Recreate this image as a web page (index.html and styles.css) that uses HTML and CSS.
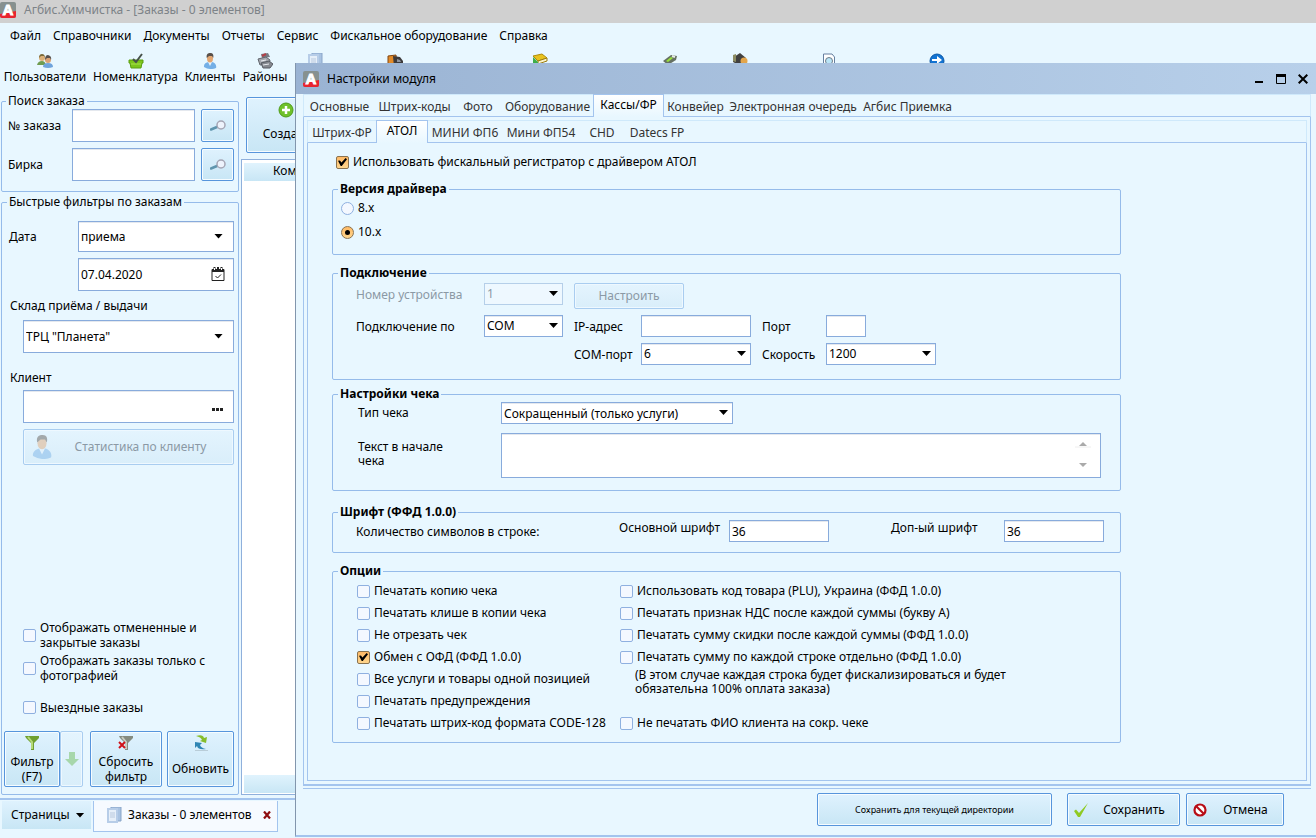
FILE: index.html
```
<!DOCTYPE html>
<html lang="ru">
<head>
    <meta charset="UTF-8">
    <meta name="viewport" content="width=device-width, initial-scale=1.0">
    <title>Агбис.Химчистка - [Заказы - 0 элементов]</title>
    <link rel="stylesheet" href="styles.css">
</head>
<body>
    <svg class="defs" width="0" height="0">
        <symbol id="person" viewBox="0 0 16 16">
            <path d="M2 14 C1.500 11 4 9.500 6.500 9 L10 9 C12.500 9.500 15 12 14 15 Q8 17.500 2 14z" fill="#74afe6"/>
            <path d="M6 9 L8 13 L10 9z" fill="#e8f3fc"/>
            <ellipse cx="8" cy="5.500" rx="3" ry="4" fill="#e2a672"/>
            <path d="M4.800 5 C4 1 6 0 8.500 0 C11 0 12 2 11.200 5 L10 3 H7z" fill="#59504a"/>
        </symbol>
        <symbol id="page" viewBox="0 0 16 16">
            <path d="M5 0 H15 V14 H5z" fill="#a9c3e2" stroke="#89a5c9"/>
            <path d="M1 1 H12 V16 H1z" fill="#b7cde8"/>
            <path d="M3 3 H10 V14 H3z" fill="#e6eff9"/>
            <path d="M4 6h5M4 8h5M4 10h5" stroke="#b9c9de"/>
        </symbol>
        <symbol id="magnifier" viewBox="0 0 16 12">
            <path d="M1 9.500 L7 7" stroke="#5f95ae" stroke-width="2.500" stroke-linecap="round"/>
            <circle cx="11" cy="5" r="4" fill="#eef3fc" stroke="#a5a5b4" stroke-width="1.500"/>
        </symbol>
    </svg>

    <header class="app-title">
        <svg class="logo" viewBox="0 0 16 16">
            <rect width="16" height="16" rx="2" fill="#87918f"/>
            <path d="M0 12 L16 9 V14 a2 2 0 0 1 -2 2 H2 a2 2 0 0 1 -2 -2z" fill="#e8242f"/>
            <text x="8" y="13" text-anchor="middle" class="logo-letter">A</text>
        </svg>
        <span>Агбис.Химчистка - [Заказы - 0 элементов]</span>
    </header>

    <nav class="menu">
        <a href="#">Файл</a>
        <a href="#">Справочники</a>
        <a href="#">Документы</a>
        <a href="#">Отчеты</a>
        <a href="#">Сервис</a>
        <a href="#">Фискальное оборудование</a>
        <a href="#">Справка</a>
    </nav>

    <div class="toolbar">
        <button type="button">
            <svg class="icon" viewBox="0 0 16 16">
                <path d="M0 12 Q1 8 5 8 Q8 8 9 12z" fill="#6f9c50"/>
                <circle cx="5" cy="5" r="3" fill="#dcb078"/>
                <path d="M2 5 Q2 1 5 1 Q8 1 8 5 L7 3H4z" fill="#7b6a3a"/>
                <path d="M6 14 Q6 10 11 10 Q16 10 16 14 Q11 16 6 14z" fill="#6fa3dc"/>
                <circle cx="11" cy="7" r="3" fill="#dba275"/>
                <path d="M8 7 Q8 2 11 2 Q15 3 14 7 L13 5H10z" fill="#5a514c"/>
            </svg>
            <span>Пользователи</span>
        </button>
        <button type="button">
            <svg class="icon" viewBox="0 0 16 16">
                <path d="M1 7 H15 V10 H14 L13 15 H3 L2 10 H1z" fill="#7cc51c" stroke="#5a9e10"/>
                <path d="M3 11 H13" stroke="#a9e04f"/>
                <path d="M5 6 L8 9 L14 1" fill="none" stroke="#47514a" stroke-width="2"/>
            </svg>
            <span>Номенклатура</span>
        </button>
        <button type="button">
            <svg class="icon"><use href="#person"/></svg>
            <span>Клиенты</span>
        </button>
        <button type="button">
            <svg class="icon" viewBox="0 0 16 16">
                <path d="M4 1 L11 0 L13 4 L5 5z" fill="#777b84"/>
                <path d="M5 3 L9 1" stroke="#b34048" stroke-width="2"/>
                <path d="M1 6 L9 4 L13 7 L12 11 L3 12z" fill="#a4a7ae" stroke="#62666e"/>
                <path d="M4 10 L12 8 L16 11 L13 15 L6 15z" fill="#85888f" stroke="#565a62"/>
                <path d="M6 12 L12 11 M4 8 L9 7" stroke="#e8eaee"/>
            </svg>
            <span>Районы</span>
        </button>
        <button type="button" aria-label="Документы">
            <svg class="icon"><use href="#page"/></svg>
        </button>
        <button type="button" aria-label="Доставка">
            <svg class="icon" viewBox="0 0 16 16">
                <path d="M1 3 L9 2 L10 14 H1z" fill="#e28a28" stroke="#7e4512"/>
                <path d="M6 3 L13 4 L16 8 V14 H7z" fill="#3d3a3b"/>
                <path d="M10 6 L13 7 L14 9 H10z" fill="#8f949c"/>
            </svg>
        </button>
        <button type="button" aria-label="Книги">
            <svg class="icon" viewBox="0 0 16 16">
                <path d="M1 3 L10 1 L15 5 L6 8z" fill="#e8c21e" stroke="#b08c0a"/>
                <path d="M6 8 L15 5 V8 L6 11z" fill="#fbf3c9" stroke="#9c7c10"/>
                <path d="M1 4 L6 9 V15 L1 11z" fill="#3fae49"/>
            </svg>
        </button>
        <button type="button" aria-label="Сканер">
            <svg class="icon" viewBox="0 0 16 16">
                <path d="M1 8 L9 2 L15 3 L14 7 L6 12z" fill="#657063"/>
                <path d="M4 8 L9 4 L11 5 L6 9z" fill="#98e03c"/>
                <path d="M10 3 L13 4" stroke="#e8eee4" stroke-width="2"/>
            </svg>
        </button>
        <button type="button" aria-label="Выдача">
            <svg class="icon" viewBox="0 0 16 16">
                <path d="M2 4 L8 0 L14 5 L7 12 L1 9z" fill="#41403f"/>
                <path d="M1 2 L4 1 L4 9 L1 8z" fill="#8d8c62"/>
                <circle cx="12" cy="8" r="3.500" fill="#e3a54b"/>
            </svg>
        </button>
        <button type="button" aria-label="Просмотр">
            <svg class="icon" viewBox="0 0 16 16">
                <path d="M2.500 1 H11 L13.500 4 V15 H2.500z" fill="#fff" stroke="#667f9f"/>
                <circle cx="8" cy="8" r="3.500" fill="#b9e5f7" stroke="#6f7a86"/>
            </svg>
        </button>
        <button type="button" aria-label="Выход">
            <svg class="icon" viewBox="0 0 16 16">
                <circle cx="8" cy="8" r="7" fill="#1273d2" stroke="#0957a8"/>
                <path d="M3 6 H8 V3 L13 7 L8 11 V8 H3z" fill="#fff"/>
            </svg>
        </button>
    </div>

    <main class="workspace">
        <aside class="sidebar">
            <fieldset class="group search-group">
                <legend>Поиск заказа</legend>
                <label for="order-no">№ заказа</label>
                <input type="text" id="order-no">
                <button type="button" class="btn" aria-label="Найти заказ"><svg class="icon-magnifier"><use href="#magnifier"/></svg></button>
                <label for="tag-no">Бирка</label>
                <input type="text" id="tag-no">
                <button type="button" class="btn" aria-label="Найти бирку"><svg class="icon-magnifier"><use href="#magnifier"/></svg></button>
            </fieldset>

            <fieldset class="group filter-group">
                <legend>Быстрые фильтры по заказам</legend>
                <div class="date-grid">
                    <label for="date-type">Дата</label>
                    <span class="select">
                        <select id="date-type"><option>приема</option></select>
                    </span>
                    <span class="field date-field">
                        <input type="text" id="date" value="07.04.2020" aria-label="Дата приема">
                        <svg class="field-icon" viewBox="0 0 14 14">
                            <path d="M1 2.500 H13 V13.500 H1z" fill="none" stroke="#222"/>
                            <path d="M1 2h12v3H1z" fill="#222"/>
                            <path d="M3.500 0v3M7 0v3M10.500 0v3" stroke="#222" stroke-width="2"/>
                            <path d="M3.500 1v2M10.500 1v2" stroke="#fff"/>
                            <path d="M4.500 9 L6.500 11 L10 7.500" fill="none" stroke="#222"/>
                        </svg>
                    </span>
                </div>
                <label for="store" class="block-label">Склад приёма / выдачи</label>
                <span class="select indent">
                    <select id="store"><option>ТРЦ "Планета"</option></select>
                </span>
                <label for="client" class="block-label client-label">Клиент</label>
                <span class="field indent">
                    <input type="text" id="client">
                    <svg class="field-icon" viewBox="0 0 14 14"><path d="M1 9h3v3H1zM5 9h3v3h-3zM9 9h3v3h-3z" fill="#222"/></svg>
                </span>
                <button type="button" class="btn stat-btn" disabled>
                    <svg class="icon-big"><use href="#person"/></svg>
                    <span>Статистика по клиенту</span>
                </button>

                <div class="filter-checks">
                    <label class="check"><input type="checkbox"><span>Отображать отмененные и закрытые заказы</span></label>
                    <label class="check"><input type="checkbox"><span>Отображать заказы только с фотографией</span></label>
                    <label class="check single"><input type="checkbox"><span>Выездные заказы</span></label>
                </div>

                <div class="filter-buttons">
                    <button type="button" class="btn tall">
                        <svg class="icon" viewBox="0 0 16 16">
                            <path d="M1 1 H15 V3 L10 8 V15 H7 V8 L2 3z" fill="#6f9f31"/>
                            <path d="M4 2 L8 7 V14" fill="none" stroke="#b5d977" stroke-width="2"/>
                        </svg>
                        <span>Фильтр (F7)</span>
                    </button>
                    <button type="button" class="btn tall drop" disabled aria-label="Список фильтров">
                        <svg class="icon" viewBox="0 0 16 16"><path d="M5 1 H11 V8 H15 L8 15 L1 8 H5z" fill="#65b84b"/></svg>
                    </button>
                    <button type="button" class="btn tall reset">
                        <svg class="icon" viewBox="0 0 16 16">
                            <path d="M1 1 H15 V3 L10 8 V15 H7 V8 L2 3z" fill="#858b80"/>
                            <path d="M4 2 L8 7 V14" fill="none" stroke="#c8ccc2" stroke-width="2"/>
                            <path d="M1 7 L7 13 M7 7 L1 13" stroke="#cf1218" stroke-width="2"/>
                        </svg>
                        <span>Сбросить фильтр</span>
                    </button>
                    <button type="button" class="btn tall refresh">
                        <svg class="icon" viewBox="0 0 16 16">
                            <path d="M3 1 Q10 -1 11 3 L14 2 L13 8 L7 6 L9 5 Q8 2 3 1z" fill="#86bd2b"/>
                            <path d="M13 14 Q5 15 4 11 L2 13 L2 7 L9 8 L7 10 Q8 13 13 14z" fill="#2f86b4"/>
                            <path d="M2 15.500h13" stroke="#b9cdd8"/>
                        </svg>
                        <span>Обновить</span>
                    </button>
                </div>
            </fieldset>
        </aside>

        <section class="orders">
            <button type="button" class="btn create-btn">
                <svg class="icon" viewBox="0 0 16 16">
                    <circle cx="8" cy="8" r="7" fill="#6fc12a" stroke="#4f9c19"/>
                    <path d="M8 4v8M4 8h8" stroke="#fff" stroke-width="2.500"/>
                </svg>
                <span>Создать</span>
            </button>
            <div class="orders-list">
                <div class="list-head">Комментарий</div>
                <div class="list-body"></div>
                <div class="list-foot"></div>
            </div>
        </section>
    </main>

    <footer class="pages">
        <button type="button" class="pages-btn">Страницы</button>
        <div class="page-tab">
            <svg class="icon"><use href="#page"/></svg>
            <span>Заказы - 0 элементов</span>
            <button type="button" class="tab-close" aria-label="Закрыть">
                <svg viewBox="0 0 8 8"><path d="M1 0.500 L7 7.500 M7 0.500 L1 7.500" stroke="#8e0d10" stroke-width="2.200"/></svg>
            </button>
        </div>
    </footer>

    <section class="dialog" role="dialog" aria-labelledby="dialog-title">
        <header class="dialog-title">
            <svg class="logo" viewBox="0 0 16 16">
                <rect width="16" height="16" rx="2" fill="#87918f"/>
                <path d="M0 12 L16 9 V14 a2 2 0 0 1 -2 2 H2 a2 2 0 0 1 -2 -2z" fill="#e8242f"/>
                <text x="8" y="13" text-anchor="middle" class="logo-letter">A</text>
            </svg>
            <span id="dialog-title">Настройки модуля</span>
            <div class="window-buttons">
                <button type="button" aria-label="Свернуть"><svg viewBox="0 0 10 10"><path d="M1 8h8" stroke="#000" stroke-width="2"/></svg></button>
                <button type="button" aria-label="Развернуть"><svg viewBox="0 0 10 10"><path d="M0.500 1 V9.500 H9.500 V1" fill="none" stroke="#000"/><path d="M0 1.500h10" stroke="#000" stroke-width="3"/></svg></button>
                <button type="button" aria-label="Закрыть"><svg viewBox="0 0 10 10"><path d="M0.700 0.700 L9.300 9.300 M9.300 0.700 L0.700 9.300" stroke="#000" stroke-width="2"/></svg></button>
            </div>
        </header>

        <div class="tabs-box">
            <div class="tabs main-tabs">
                <button type="button">Основные</button>
                <button type="button">Штрих-коды</button>
                <button type="button">Фото</button>
                <button type="button">Оборудование</button>
                <button type="button" class="active">Кассы/ФР</button>
                <button type="button">Конвейер</button>
                <button type="button">Электронная очередь</button>
                <button type="button">Агбис Приемка</button>
            </div>
            <div class="tab-page outer-page">
                <div class="tabs sub-tabs">
                    <button type="button">Штрих-ФР</button>
                    <button type="button" class="active">АТОЛ</button>
                    <button type="button">МИНИ ФП6</button>
                    <button type="button">Мини ФП54</button>
                    <button type="button">CHD</button>
                    <button type="button">Datecs FP</button>
                </div>
                <form class="tab-page settings">
                    <label class="check use-atol"><input type="checkbox" checked><span>Использовать фискальный регистратор с драйвером АТОЛ</span></label>

                    <fieldset class="group version">
                        <legend>Версия драйвера</legend>
                        <label class="check"><input type="radio" name="driver"><span>8.x</span></label>
                        <label class="check"><input type="radio" name="driver" checked><span>10.x</span></label>
                    </fieldset>

                    <fieldset class="group connection">
                        <legend>Подключение</legend>
                        <div class="connection-grid">
                            <label for="device" class="muted">Номер устройства</label>
                            <span class="select disabled"><select id="device" disabled><option>1</option></select></span>
                            <button type="button" class="btn setup-btn" disabled>Настроить</button>
                            <label for="conn" class="row-start">Подключение по</label>
                            <span class="select"><select id="conn"><option>COM</option></select></span>
                            <label for="ip">IP-адрес</label>
                            <input type="text" id="ip" class="ip">
                            <label for="port">Порт</label>
                            <input type="text" id="port" class="port">
                            <label for="com" class="com-label">COM-порт</label>
                            <span class="select"><select id="com"><option>6</option></select></span>
                            <label for="speed">Скорость</label>
                            <span class="select wide"><select id="speed"><option>1200</option></select></span>
                        </div>
                    </fieldset>

                    <fieldset class="group receipt">
                        <legend>Настройки чека</legend>
                        <div class="receipt-grid">
                            <label for="receipt-type">Тип чека</label>
                            <span class="select receipt-type"><select id="receipt-type"><option>Сокращенный (только услуги)</option></select></span>
                            <label for="receipt-text" class="receipt-label">Текст в начале чека</label>
                            <span class="memo">
                                <textarea id="receipt-text"></textarea>
                                <svg class="memo-arrows" viewBox="0 0 16 28">
                                    <path d="M4 5 L8 1 L12 5z M4 22 H12 L8 26z" fill="#aaa"/>
                                    <path d="M0 6h16" stroke="#eee"/>
                                </svg>
                            </span>
                        </div>
                    </fieldset>

                    <fieldset class="group fonts">
                        <legend>Шрифт (ФФД 1.0.0)</legend>
                        <div class="fonts-grid">
                            <span class="row-caption">Количество символов в строке:</span>
                            <label for="font-main">Основной шрифт</label>
                            <input type="text" id="font-main" value="36">
                            <label for="font-extra">Доп-ый шрифт</label>
                            <input type="text" id="font-extra" value="36">
                        </div>
                    </fieldset>

                    <fieldset class="group options">
                        <legend>Опции</legend>
                        <div class="options-grid">
                            <label class="check"><input type="checkbox"><span>Печатать копию чека</span></label>
                            <label class="check"><input type="checkbox"><span>Использовать код товара (PLU), Украина (ФФД 1.0.0)</span></label>
                            <label class="check"><input type="checkbox"><span>Печатать клише в копии чека</span></label>
                            <label class="check"><input type="checkbox"><span>Печатать признак НДС после каждой суммы (букву А)</span></label>
                            <label class="check"><input type="checkbox"><span>Не отрезать чек</span></label>
                            <label class="check"><input type="checkbox"><span>Печатать сумму скидки после каждой суммы (ФФД 1.0.0)</span></label>
                            <label class="check"><input type="checkbox" checked><span>Обмен с ОФД (ФФД 1.0.0)</span></label>
                            <label class="check"><input type="checkbox"><span>Печатать сумму по каждой строке отдельно (ФФД 1.0.0)</span></label>
                            <label class="check"><input type="checkbox"><span>Все услуги и товары одной позицией</span></label>
                            <p class="note">(В этом случае каждая строка будет фискализироваться и будет обязательна 100% оплата заказа)</p>
                            <label class="check"><input type="checkbox"><span>Печатать предупреждения</span></label>
                            <label class="check"><input type="checkbox"><span>Печатать штрих-код формата CODE-128</span></label>
                            <label class="check"><input type="checkbox"><span>Не печатать ФИО клиента на сокр. чеке</span></label>
                        </div>
                    </fieldset>
                </form>
            </div>
        </div>

        <footer class="dialog-buttons">
            <button type="button" class="btn save-dir">Сохранить для текущей директории</button>
            <button type="button" class="btn save">
                <svg class="icon" viewBox="0 0 16 16"><path d="M1 9 L3 7.500 L6 11 L15 1 L7 15 L5 15z" fill="#8fca22"/></svg>
                <span>Сохранить</span>
            </button>
            <button type="button" class="btn cancel">
                <svg class="icon" viewBox="0 0 16 16">
                    <circle cx="8" cy="8" r="5.500" fill="#fff" stroke="#b80d16" stroke-width="2.200"/>
                    <path d="M4 4 L12 12" stroke="#b80d16" stroke-width="2.200"/>
                </svg>
                <span>Отмена</span>
            </button>
        </footer>
    </section>
</body>
</html>
```
FILE: styles.css
```
* {
    box-sizing: border-box;
}
body {
    margin: 0;
    height: 100vh;
    display: flex;
    flex-direction: column;
    position: relative;
    overflow: hidden;
    background-color: #e8f7ff;
    color: #000;
    font-family: "Noto Sans", "Open Sans", sans-serif;
    font-size: 12px;
    line-height: 16px;
}
button, input, select, textarea {
    font: inherit;
    color: inherit;
    margin: 0;
}
button {
    border: none;
    background: none;
    padding: 0;
}
svg {
    display: block;
    flex: none;
}
.defs {
    position: absolute;
}
.logo {
    width: 16px;
    height: 16px;
}
.logo-letter {
    font: bold 15px "Liberation Sans", sans-serif;
    fill: #fff;
    stroke: #fff;
}
.icon {
    width: 16px;
    height: 16px;
}
.icon-magnifier {
    width: 16px;
    height: 12px;
}
.icon-big {
    width: 24px;
    height: 24px;
}

/* main window */
.app-title {
    height: 23px;
    flex: none;
    display: flex;
    align-items: center;
    gap: 8px;
    padding-bottom: 3px;
    background-color: #d0d0d0;
    color: #7d8388;
}
.menu {
    height: 28px;
    flex: none;
    display: flex;
    align-items: center;
    gap: 12px;
    padding: 0 10px 2px;
}
.menu a {
    color: #000;
    text-decoration: none;
}
.toolbar {
    height: 42px;
    flex: none;
    display: grid;
    grid-template-columns: 90px 91px 58px 52px 48px 112px 178px 82px 58px 120px 96px;
    padding-top: 2px;
}
.toolbar button {
    display: flex;
    flex-direction: column;
    align-items: center;
    white-space: nowrap;
}
.workspace {
    flex: 1;
    min-height: 0;
    display: flex;
    gap: 2px;
    padding-bottom: 3px;
    border-bottom: 1px solid #a3c4ee;
}
.sidebar {
    width: 239px;
    flex: none;
    display: flex;
    flex-direction: column;
    gap: 2px;
    padding-left: 1px;
}
.group {
    margin: 0;
    min-width: 0;
    border: 1px solid #95bbea;
    border-radius: 2px;
    padding: 0;
}
.group legend {
    margin-left: -2px;
    padding: 0 2px;
}
.search-group {
    display: grid;
    grid-template-columns: 64px 123px 39px;
    grid-auto-rows: 33px;
    align-items: stretch;
    row-gap: 6px;
    padding: 0 3px 10px 6px;
}
.search-group label {
    align-self: center;
}
.search-group .btn {
    margin-left: 6px;
}
.filter-group {
    flex: 1;
    display: flex;
    flex-direction: column;
    padding: 11px 4px 7px 7px;
}
input[type="text"], select, textarea {
    width: 100%;
    height: 100%;
    border: 1px solid #88abdc;
    border-radius: 0;
    background-color: #fff;
    box-shadow: inset 0 1px #e4e8ee;
    padding: 0 2px;
    outline: none;
}
select {
    appearance: none;
    opacity: 1;
}
textarea {
    display: block;
    resize: none;
}
.select, .field {
    position: relative;
    display: block;
    height: 33px;
}
.select::after {
    content: "";
    position: absolute;
    right: 11px;
    top: 50%;
    margin-top: -3px;
    width: 9px;
    height: 5px;
    background-color: #000;
    clip-path: polygon(0 0, 100% 0, 50% 100%);
}
.field-icon {
    position: absolute;
    right: 9px;
    top: 9px;
    width: 14px;
    height: 14px;
}
.date-grid {
    display: grid;
    grid-template-columns: 69px 1fr;
    row-gap: 6px;
    align-items: center;
}
.date-grid .select {
    height: 31px;
}
.date-field {
    grid-column: 2;
}
.block-label {
    margin: 7px 0 6px 1px;
}
.client-label {
    margin: 17px 0 4px 1px;
}
.indent, .stat-btn {
    margin-left: 14px;
}
.btn {
    display: flex;
    align-items: center;
    justify-content: center;
    border: 1px solid #5795dc;
    border-radius: 2px;
    background-image: linear-gradient(#dff2fe, #c8e6f5);
    box-shadow: inset 0 0 0 1px #f6fcff;
}
.btn:disabled {
    border-color: #a9cdf0;
    background-image: linear-gradient(#e4f4fe, #d9eefa);
    box-shadow: inset 0 0 0 1px #eef8ff;
    color: #8b99a5;
}
.btn:disabled svg {
    opacity: 0.45;
}
.stat-btn {
    height: 36px;
    margin-top: 6px;
    padding: 0 6px;
}
.stat-btn span {
    flex: 1;
}
.filter-checks {
    margin-top: auto;
    padding: 0 20px 0 14px;
    display: flex;
    flex-direction: column;
    gap: 3px;
    line-height: 15px;
}
.check {
    display: flex;
    align-items: center;
    gap: 4px;
}
.check.single {
    margin: 14px 0 16px;
}
input[type="checkbox"], input[type="radio"] {
    appearance: none;
    flex: none;
    width: 13px;
    height: 13px;
    border: 1px solid #8fb0e0;
    border-radius: 2px;
    background-color: #f4f8ff;
    display: grid;
    place-items: center;
}
input[type="radio"] {
    border-radius: 50%;
}
input:checked {
    border-color: #8a7350;
    background-image: linear-gradient(#ffb965, #ffd68d);
}
input[type="checkbox"]:checked::after {
    content: "";
    width: 9px;
    height: 8px;
    background-color: #000;
    clip-path: polygon(0 35%, 22% 30%, 38% 55%, 85% 0, 100% 15%, 42% 100%, 30% 100%);
}
input[type="radio"]:checked::after {
    content: "";
    width: 5px;
    height: 5px;
    border-radius: 50%;
    background-color: #000;
}
.filter-buttons {
    display: flex;
    height: 56px;
    margin-left: -5px;
}
.tall {
    flex-direction: column;
    justify-content: flex-start;
    width: 56px;
    padding-top: 3px;
    gap: 3px;
    line-height: 15px;
}
.drop {
    width: 23px;
    padding: 0;
    justify-content: center;
}
.reset {
    width: 72px;
    margin: 0 5px 0 7px;
}
.refresh {
    width: 67px;
    gap: 10px;
}
.orders {
    flex: 1;
    display: flex;
    flex-direction: column;
    gap: 6px;
    padding-top: 4px;
}
.create-btn {
    flex-direction: column;
    justify-content: flex-start;
    gap: 8px;
    width: 80px;
    height: 56px;
    margin-left: 5px;
    padding-top: 4px;
}
.orders-list {
    flex: 1;
    display: flex;
    flex-direction: column;
    padding: 3px 2px 1px;
    border: 1px solid #8fb0dc;
    background-color: #fff;
}
.list-head, .list-foot {
    height: 18px;
    padding-left: 29px;
    background-image: linear-gradient(#e0f3fd, #c8e6f5);
}
.list-body {
    flex: 1;
}
.pages {
    height: 39px;
    flex: none;
    display: flex;
    align-items: flex-start;
    gap: 2px;
    padding: 1px 2px;
    border-top: 1px solid #a3c4ee;
}
.pages-btn {
    display: flex;
    align-items: center;
    gap: 6px;
    width: 89px;
    height: 28px;
    padding-left: 9px;
    background-image: linear-gradient(#dff2fe, #c8e6f5);
}
.pages-btn::after {
    content: "";
    width: 9px;
    height: 5px;
    background-color: #000;
    clip-path: polygon(0 0, 100% 0, 50% 100%);
}
.page-tab {
    display: flex;
    align-items: center;
    gap: 6px;
    width: 185px;
    height: 31px;
    padding: 0 6px 2px 12px;
    border: 1px solid #a3c4ee;
    border-top: none;
    background-color: #f6faff;
}
.tab-close {
    margin-left: auto;
}
.tab-close svg {
    width: 8px;
    height: 8px;
}

/* settings window */
.dialog {
    position: absolute;
    left: 295px;
    right: 0;
    top: 63px;
    bottom: 1px;
    display: flex;
    flex-direction: column;
    border-left: 1px solid #8296ad;
    border-bottom: 2px solid #a3c4ee;
    background-color: #e8f7ff;
}
.dialog-title {
    height: 31px;
    flex: none;
    display: flex;
    align-items: center;
    gap: 8px;
    padding: 0 8px 0 7px;
    background-image: linear-gradient(to right, #9ab3d3, #b8d0ea);
}
.window-buttons {
    display: flex;
    gap: 12px;
    margin-left: auto;
}
.window-buttons svg {
    width: 10px;
    height: 10px;
}
.tabs-box {
    flex: 1;
    min-height: 0;
    display: flex;
    flex-direction: column;
    margin: 0 5px 0 7px;
    padding-bottom: 2px;
    border-bottom: 1px solid #a3c4ee;
}
.tabs {
    display: grid;
    height: 23px;
    flex: none;
    border: 1px solid #cfe9fb;
    border-bottom-color: #a3c4ee;
    color: #333;
}
.tabs button {
    padding-top: 2px;
    white-space: nowrap;
}
.tabs .active {
    margin: -1px 0;
    padding: 0 0 3px;
    border: 1px solid #a3c4ee;
    border-bottom: none;
    background-image: linear-gradient(#fff, #e8f7ff);
    color: #000;
}
.main-tabs {
    grid-template-columns: 71px 79px 48px 91px 71px 63px 132px 97px;
}
.sub-tabs {
    grid-template-columns: 68px 52px 74px 78px 44px 66px;
}
.tab-page {
    flex: 1;
    min-height: 0;
    display: flex;
    flex-direction: column;
    border: 1px solid #a3c4ee;
    border-top: none;
}
.outer-page {
    padding: 3px;
    border-bottom-width: 2px;
}
.settings {
    padding: 11px 185px 0 24px;
}
.settings .group legend {
    margin-left: 5px;
    font-weight: bold;
}
.use-atol {
    margin-left: 4px;
    margin-bottom: 11px;
}
.version {
    padding-bottom: 11px;
}
.version .check {
    height: 22px;
    margin-left: 8px;
}
.version .check + .check {
    margin-top: 2px;
}
.connection {
    margin-top: 10px;
    padding: 2px 0 14px;
}
.connection-grid {
    display: grid;
    grid-template-columns: 128px 90px 67px 121px 64px 110px;
    grid-template-rows: 26px 22px 22px;
    row-gap: 6px;
    padding-left: 23px;
}
.connection-grid label {
    line-height: 24px;
}
.connection-grid .select, .receipt-type {
    height: 22px;
    margin-right: 11px;
}
.settings .select::after {
    right: 5px;
}
.connection-grid .select.wide {
    margin-right: 0;
}
.muted {
    color: #8b99a5;
}
.disabled select {
    border-color: #b5cfe9;
    background-color: #eef8ff;
    color: #8b99a5;
    box-shadow: none;
}
.setup-btn {
    grid-column: 3 / 5;
    width: 110px;
}
.row-start {
    grid-column: 1;
}
.com-label {
    grid-column: 3;
}
.ip {
    max-width: 110px;
}
.port {
    max-width: 40px;
}
.receipt {
    margin-top: 6px;
    padding: 0 0 12px;
}
.receipt-grid {
    display: grid;
    grid-template-columns: 143px 1fr;
    grid-template-rows: 22px 45px;
    row-gap: 9px;
    padding: 0 19px 0 25px;
    line-height: 22px;
}
.receipt-type {
    width: 232px;
}
.receipt-label {
    width: 100px;
    padding-top: 7px;
    line-height: 14px;
}
.memo {
    position: relative;
}
.memo-arrows {
    position: absolute;
    right: 10px;
    top: 8px;
    width: 16px;
    height: 28px;
}
.fonts {
    margin-top: 13px;
    padding: 0 0 10px;
}
.fonts-grid {
    display: grid;
    grid-template-columns: 263px 110px 162px 113px 100px;
    grid-template-rows: 22px;
    padding-left: 23px;
}
.fonts-grid input {
    max-width: 100px;
}
.row-caption {
    line-height: 24px;
}
.options {
    margin-top: 10px;
    padding: 1px 0 8px;
}
.options-grid {
    display: grid;
    grid-template-columns: 263px 1fr;
    grid-auto-rows: 22px;
    padding-left: 24px;
}
.note {
    grid-column: 2;
    grid-row: 5 / 7;
    max-width: 410px;
    margin: 0;
    padding-left: 15px;
    line-height: 14px;
}
.dialog-buttons {
    flex: none;
    display: flex;
    justify-content: flex-end;
    padding: 4px 32px 9px;
}
.dialog-buttons .btn {
    height: 33px;
}
.dialog-buttons svg {
    margin-left: 5px;
}
.dialog-buttons span {
    flex: 1;
}
.save-dir {
    width: 235px;
    font-size: 9px;
}
.save {
    width: 113px;
    margin-left: 15px;
}
.cancel {
    width: 98px;
    margin-left: 6px;
}
```
